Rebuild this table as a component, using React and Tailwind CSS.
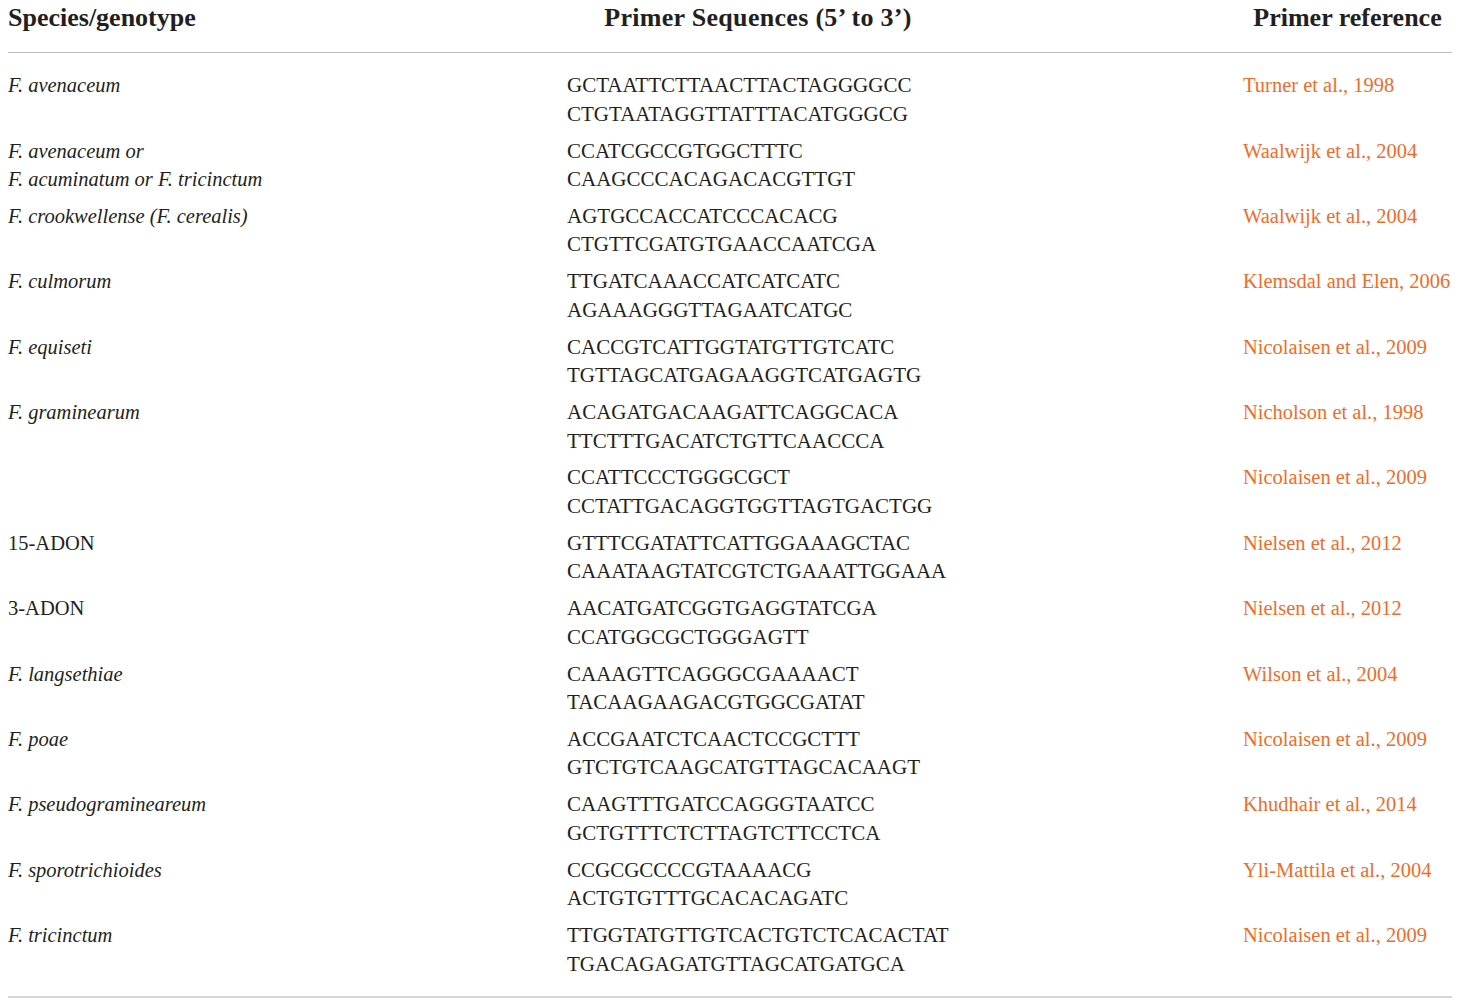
import React from "react";

const rows = [
  { name: "F. avenaceum", italic: true, seqs: ["GCTAATTCTTAACTTACTAGGGGCC", "CTGTAATAGGTTATTTACATGGGCG"], ref: "Turner et al., 1998" },
  { name: ["F. avenaceum or", "F. acuminatum or F. tricinctum"], italic: true, seqs: ["CCATCGCCGTGGCTTTC", "CAAGCCCACAGACACGTTGT"], ref: "Waalwijk et al., 2004" },
  { name: "F. crookwellense (F. cerealis)", italic: true, seqs: ["AGTGCCACCATCCCACACG", "CTGTTCGATGTGAACCAATCGA"], ref: "Waalwijk et al., 2004" },
  { name: "F. culmorum", italic: true, seqs: ["TTGATCAAACCATCATCATC", "AGAAAGGGTTAGAATCATGC"], ref: "Klemsdal and Elen, 2006" },
  { name: "F. equiseti", italic: true, seqs: ["CACCGTCATTGGTATGTTGTCATC", "TGTTAGCATGAGAAGGTCATGAGTG"], ref: "Nicolaisen et al., 2009" },
  { name: "F. graminearum", italic: true, seqs: ["ACAGATGACAAGATTCAGGCACA", "TTCTTTGACATCTGTTCAACCCA"], ref: "Nicholson et al., 1998" },
  { name: "", italic: true, seqs: ["CCATTCCCTGGGCGCT", "CCTATTGACAGGTGGTTAGTGACTGG"], ref: "Nicolaisen et al., 2009" },
  { name: "15-ADON", italic: false, seqs: ["GTTTCGATATTCATTGGAAAGCTAC", "CAAATAAGTATCGTCTGAAATTGGAAA"], ref: "Nielsen et al., 2012" },
  { name: "3-ADON", italic: false, seqs: ["AACATGATCGGTGAGGTATCGA", "CCATGGCGCTGGGAGTT"], ref: "Nielsen et al., 2012" },
  { name: "F. langsethiae", italic: true, seqs: ["CAAAGTTCAGGGCGAAAACT", "TACAAGAAGACGTGGCGATAT"], ref: "Wilson et al., 2004" },
  { name: "F. poae", italic: true, seqs: ["ACCGAATCTCAACTCCGCTTT", "GTCTGTCAAGCATGTTAGCACAAGT"], ref: "Nicolaisen et al., 2009" },
  { name: "F. pseudogramineareum", italic: true, seqs: ["CAAGTTTGATCCAGGGTAATCC", "GCTGTTTCTCTTAGTCTTCCTCA"], ref: "Khudhair et al., 2014" },
  { name: "F. sporotrichioides", italic: true, seqs: ["CCGCGCCCCGTAAAACG", "ACTGTGTTTGCACACAGATC"], ref: "Yli-Mattila et al., 2004" },
  { name: "F. tricinctum", italic: true, seqs: ["TTGGTATGTTGTCACTGTCTCACACTAT", "TGACAGAGATGTTAGCATGATGCA"], ref: "Nicolaisen et al., 2009" },
];

export default function App() {
  return (
    <div
      className="bg-white w-[1460px] h-[1006px] px-2 text-[#231f20]"
      style={{ fontFamily: '"Liberation Serif", "Times New Roman", serif' }}
    >
      <div className="grid grid-cols-[559px_676px_209px] border-b border-[#bdbdbd] pt-[3px] h-[53px] text-[26px] font-bold leading-[30px]">
        <div>Species/genotype</div>
        <div className="w-[382px] text-center tracking-[0.3px]">Primer Sequences (5’ to 3’)</div>
        <div className="text-center">Primer reference</div>
      </div>

      <div className="pt-[14px] pb-[14px] border-b-2 border-[#d6d6d6] text-[20.5px] leading-[28.5px]">
        {rows.map((r, i) => (
          <div key={i} className="grid grid-cols-[559px_676px_209px] py-[4.2px]">
            <div className={r.italic ? "italic" : ""}>
              {Array.isArray(r.name)
                ? r.name.map((n) => <div key={n}>{n}</div>)
                : r.name}
            </div>
            <div className="text-[21px]">
              {r.seqs.map((s) => (
                <div key={s}>{s}</div>
              ))}
            </div>
            <div className="text-[#f26b2a]">{r.ref}</div>
          </div>
        ))}
      </div>
    </div>
  );
}
